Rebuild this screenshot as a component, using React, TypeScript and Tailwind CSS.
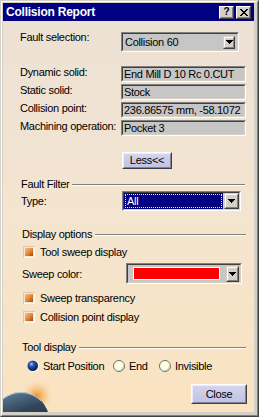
import React from "react";

const sunkenOuter =
  "border border-t-[#808080] border-l-[#808080] border-r-white border-b-white";
const sunkenInner =
  "border border-t-[#404040] border-l-[#404040] border-r-[#d4d0c8] border-b-[#d4d0c8]";

function Arrow() {
  return (
    <svg width="7" height="4" shapeRendering="crispEdges">
      <rect x="0" y="0" width="7" height="1" fill="#000" />
      <rect x="1" y="1" width="5" height="1" fill="#000" />
      <rect x="2" y="2" width="3" height="1" fill="#000" />
      <rect x="3" y="3" width="1" height="1" fill="#000" />
    </svg>
  );
}

function DropBtn({ className }: { className: string }) {
  return (
    <div
      className={
        "bg-[#d4d0c8] border border-t-[#d4d0c8] border-l-[#d4d0c8] border-r-[#404040] border-b-[#404040] " +
        className
      }
    >
      <div className="w-full h-full flex items-center justify-center border border-t-white border-l-white border-r-[#808080] border-b-[#808080]">
        <Arrow />
      </div>
    </div>
  );
}

function Field({ text }: { text: string }) {
  return (
    <div className={"w-[125px] h-[16px] " + sunkenOuter}>
      <div className={"w-full h-full bg-[#c6c6c6] pl-[1px] " + sunkenInner}>
        <div className="leading-[12px] whitespace-nowrap overflow-hidden">{text}</div>
      </div>
    </div>
  );
}

function Check() {
  return (
    <svg width="12" height="12" shapeRendering="crispEdges">
      <defs>
        <linearGradient id="cg" x1="0" y1="0" x2="1" y2="1">
          <stop offset="0" stopColor="#f9c080" />
          <stop offset="0.5" stopColor="#e88a3a" />
          <stop offset="1" stopColor="#a84410" />
        </linearGradient>
      </defs>
      <rect x="0" y="0" width="12" height="12" fill="#d8c8b0" />
      <rect x="1" y="1" width="11" height="11" fill="#fffaf0" />
      <rect x="1" y="1" width="10" height="10" fill="#f3e6d2" />
      <rect x="2" y="2" width="8" height="8" fill="url(#cg)" />
    </svg>
  );
}

function Radio({ on }: { on?: boolean }) {
  if (on) {
    return (
      <svg width="12" height="12">
        <defs>
          <radialGradient id="rg" cx="0.38" cy="0.35" r="0.65">
            <stop offset="0" stopColor="#a8c4f0" />
            <stop offset="0.35" stopColor="#2a56b0" />
            <stop offset="1" stopColor="#061a50" />
          </radialGradient>
        </defs>
        <circle cx="6" cy="6" r="6" fill="#fffdf4" />
        <circle cx="5.7" cy="5.7" r="5.3" fill="url(#rg)" />
      </svg>
    );
  }
  return (
    <svg width="12" height="12">
      <circle cx="6" cy="6" r="5.5" fill="#ffffe4" stroke="#6c6c6c" strokeWidth="1" />
      <path d="M2.2 9.8 A5.5 5.5 0 0 0 9.8 2.2" fill="none" stroke="#c8c8c8" strokeWidth="1" />
    </svg>
  );
}

function GroupHeader({ label, ml }: { label: string; ml: string }) {
  return (
    <div className={"flex items-center h-[13px] w-[224px] " + ml}>
      <span className="whitespace-nowrap">{label}</span>
      <div className="flex-1 ml-[3px] flex flex-col">
        <div className="h-[1px] bg-[#808080]" />
        <div className="h-[1px] bg-white" />
      </div>
    </div>
  );
}

function RaisedBtn({ label, className }: { label: string; className: string }) {
  return (
    <div
      className={
        "border border-t-white border-l-white border-r-[#404040] border-b-[#404040] " + className
      }
    >
      <div className="w-full h-full flex items-center justify-center bg-linear-to-b from-[#d4d4ee] to-[#c2c2e2] border border-t-[#ececff] border-l-[#ececff] border-r-[#8080a0] border-b-[#8080a0]">
        {label}
      </div>
    </div>
  );
}

function TitleBtn({ children }: { children: React.ReactNode }) {
  return (
    <div className="w-[15px] h-[13px] bg-[#d4d0c8] border border-t-white border-l-white border-r-[#404040] border-b-[#404040]">
      <div className="w-full h-full flex items-center justify-center border border-t-[#d4d0c8] border-l-[#d4d0c8] border-r-[#808080] border-b-[#808080]">
        {children}
      </div>
    </div>
  );
}

export default function App() {
  return (
    <div className="w-[259px] h-[417px] bg-[#d4d0c8] border border-t-[#d4d0c8] border-l-[#d4d0c8] border-r-[#404040] border-b-[#404040] font-['Liberation_Sans',Arial,sans-serif] text-[11px] leading-[13px] tracking-[-0.3px] text-black">
      <div className="w-full h-full flex flex-col border border-t-white border-l-white border-r-[#808080] border-b-[#808080] pt-[1px] pl-[1px] pr-[3px] pb-[3px]">
        {/* Title bar */}
        <div className="h-[18px] bg-[#000080] flex items-center pl-[3px] pr-[3px]">
          <span className="text-white font-bold text-[12px] tracking-[-0.23px] leading-[14px]">
            Collision Report
          </span>
          <div className="ml-auto flex gap-[2px]">
            <TitleBtn>
              <span className="font-bold text-[10px] leading-[10px] tracking-normal">?</span>
            </TitleBtn>
            <TitleBtn>
              <svg width="8" height="7" shapeRendering="crispEdges">
                <path d="M0.5 0 L7.5 7 M7.5 0 L0.5 7" stroke="#000" strokeWidth="1.6" />
              </svg>
            </TitleBtn>
          </div>
        </div>

        {/* Content */}
        <div className="relative flex-1 flex flex-col bg-linear-to-b from-[#ede1d5] via-[#f4e5cf] to-[#fae3c0] pl-[17px] overflow-hidden">
          {/* globe decoration */}
          <svg className="absolute left-0 bottom-0" width="70" height="36">
            <defs>
              <radialGradient id="glow" cx="0.5" cy="0.5" r="0.5">
                <stop offset="0" stopColor="#f49030" stopOpacity="1" />
                <stop offset="0.45" stopColor="#f7b468" stopOpacity="0.6" />
                <stop offset="1" stopColor="#fae3c0" stopOpacity="0" />
              </radialGradient>
              <linearGradient id="globe" x1="0" y1="0" x2="0.3" y2="1">
                <stop offset="0" stopColor="#a8c4e0" />
                <stop offset="0.1" stopColor="#5a7894" />
                <stop offset="0.45" stopColor="#304458" />
                <stop offset="1" stopColor="#1c2838" />
              </linearGradient>
            </defs>
            <circle cx="34" cy="20" r="17" fill="url(#glow)" />
            <circle cx="18" cy="44" r="28" fill="url(#globe)" />
            <path d="M-8 34 A28 28 0 0 1 38 25" fill="none" stroke="#d0e2f4" strokeWidth="1" opacity="0.8" />
          </svg>

          {/* Fault selection */}
          <div className="relative flex h-[20px] mt-[11px]">
            <div className="w-[101px] -mt-[1px] whitespace-nowrap">Fault selection:</div>
            <div className={"w-[118px] h-[20px] " + sunkenOuter}>
              <div className={"w-full h-full bg-[#c6c6c6] flex items-center p-[1px] pl-[2px] " + sunkenInner}>
                <span className="flex-1 whitespace-nowrap">Collision 60</span>
                <DropBtn className="w-[12px] h-[13px] mr-[1px]" />
              </div>
            </div>
          </div>

          {/* Info fields */}
          <div className="relative flex flex-col gap-[2px] mt-[14px]">
            {[
              ["Dynamic solid:", "End Mill D 10 Rc 0.CUT"],
              ["Static solid:", "Stock"],
              ["Collision point:", "236.86575 mm, -58.1072"],
              ["Machining operation:", "Pocket 3"],
            ].map(([l, v]) => (
              <div key={l} className="flex h-[16px]">
                <div className="w-[101px] whitespace-nowrap">{l}</div>
                <Field text={v} />
              </div>
            ))}
          </div>

          {/* Less button */}
          <RaisedBtn label="Less<<" className="relative ml-[102px] mt-[16px] w-[50px] h-[17px]" />

          {/* Fault Filter */}
          <div className="relative mt-[9px]">
            <GroupHeader label="Fault Filter" ml="ml-[1px]" />
          </div>
          <div className="relative flex h-[20px]">
            <div className="w-[101px] ml-[1px] mt-[4px]">Type:</div>
            <div className={"w-[119px] h-[20px] " + sunkenOuter}>
              <div className={"w-full h-full flex bg-[#d4d0c8] " + sunkenInner}>
                <div className="flex-1 bg-[#000080] p-[1px]">
                  <div className="w-full h-full border border-dotted border-[#f0f0a0] text-white pl-[1px] leading-[12px]">
                    All
                  </div>
                </div>
                <DropBtn className="w-[15px] h-full ml-[1px]" />
              </div>
            </div>
          </div>

          {/* Display options */}
          <div className="relative mt-[17px]">
            <GroupHeader label="Display options" ml="ml-[2px]" />
          </div>
          <div className="relative flex items-center h-[12px] mt-[5px] ml-[3px]">
            <Check />
            <span className="ml-[5px]">Tool sweep display</span>
          </div>
          <div className="relative flex items-center h-[21px] mt-[5px]">
            <div className="w-[104px] ml-[2px] mt-[1px]">Sweep color:</div>
            <div className={"w-[116px] h-[21px] " + sunkenOuter}>
              <div className={"w-full h-full bg-[#c6c6c6] flex items-center pl-[5px] pr-[1px] " + sunkenInner}>
                <div className="w-[87px] h-[13px] border border-white bg-[#ff0000] -mt-[1px]" />
                <DropBtn className="w-[13px] h-[16px] ml-auto" />
              </div>
            </div>
          </div>
          <div className="relative flex items-center h-[12px] mt-[8px] ml-[3px]">
            <Check />
            <span className="ml-[5px]">Sweep transparency</span>
          </div>
          <div className="relative flex items-center h-[12px] mt-[7px] ml-[3px]">
            <Check />
            <span className="ml-[5px]">Collision point display</span>
          </div>

          {/* Tool display */}
          <div className="relative mt-[18px]">
            <GroupHeader label="Tool display" ml="ml-[2px]" />
          </div>
          <div className="relative flex items-center h-[12px] mt-[6px] ml-[7px]">
            <div className="flex items-center w-[86px]">
              <Radio on />
              <span className="ml-[4px]">Start Position</span>
            </div>
            <div className="flex items-center w-[46px]">
              <Radio />
              <span className="ml-[4px]">End</span>
            </div>
            <div className="flex items-center">
              <Radio />
              <span className="ml-[4px]">Invisible</span>
            </div>
          </div>

          <RaisedBtn label="Close" className="relative ml-[171px] mt-[12px] w-[56px] h-[20px]" />
        </div>
      </div>
    </div>
  );
}
